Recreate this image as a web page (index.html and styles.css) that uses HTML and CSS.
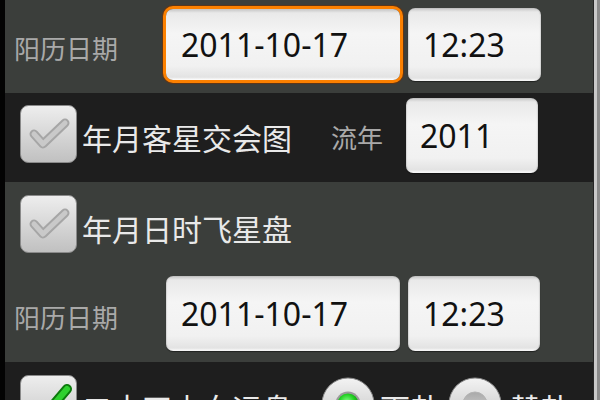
FILE: index.html
```html
<!DOCTYPE html>
<html lang="zh-CN">
<head>
<meta charset="utf-8">
<title>飞星盘</title>
<link rel="stylesheet" href="styles.css">
</head>
<body>
<div class="screen">
  <div class="edge-left"></div>
  <div class="content">
    <div class="row row-light row-top">
      <span class="label label-date">阳历日期</span>
      <div class="field field-date focused">2011-10-17</div>
      <div class="field field-time">12:23</div>
    </div>

    <div class="row row-dark row-chart">
      <svg class="checkbox" viewBox="0 0 57 58" width="57" height="58" aria-hidden="true">
        <defs>
          <linearGradient id="cbg1" x1="0" y1="0" x2="0" y2="1">
            <stop offset="0" stop-color="#eeeeee"/>
            <stop offset="1" stop-color="#c0c0c0"/>
          </linearGradient>
        </defs>
        <rect x="0.5" y="0.5" width="56" height="57" rx="8" fill="url(#cbg1)" stroke="#8a8a8a"/>
        <path d="M14 29 L23 39 L45 18" fill="none" stroke="#a6a6a6" stroke-width="9" stroke-linecap="round" stroke-linejoin="round"/>
        <path d="M14 29 L23 39 L45 18" fill="none" stroke="#c9c9c9" stroke-width="5" stroke-linecap="round" stroke-linejoin="round"/>
      </svg>
      <span class="check-text">年月客星交会图</span>
      <span class="label label-year">流年</span>
      <div class="field field-year">2011</div>
    </div>

    <div class="row-light section">
      <div class="line line-check">
        <svg class="checkbox" viewBox="0 0 57 58" width="57" height="58" aria-hidden="true">
          <defs>
            <linearGradient id="cbg2" x1="0" y1="0" x2="0" y2="1">
              <stop offset="0" stop-color="#eeeeee"/>
              <stop offset="1" stop-color="#c0c0c0"/>
            </linearGradient>
          </defs>
          <rect x="0.5" y="0.5" width="56" height="57" rx="8" fill="url(#cbg2)" stroke="#8a8a8a"/>
          <path d="M14 29 L23 39 L45 18" fill="none" stroke="#a6a6a6" stroke-width="9" stroke-linecap="round" stroke-linejoin="round"/>
          <path d="M14 29 L23 39 L45 18" fill="none" stroke="#c9c9c9" stroke-width="5" stroke-linecap="round" stroke-linejoin="round"/>
        </svg>
        <span class="check-text">年月日时飞星盘</span>
      </div>
      <div class="line line-date">
        <span class="label label-date2">阳历日期</span>
        <div class="field field-date2">2011-10-17</div>
        <div class="field field-time2">12:23</div>
      </div>
    </div>

    <div class="row row-dark row-bottom">
      <svg class="checkbox" viewBox="0 0 57 58" width="57" height="58" aria-hidden="true">
        <defs>
          <linearGradient id="cbg3" x1="0" y1="0" x2="0" y2="1">
            <stop offset="0" stop-color="#eeeeee"/>
            <stop offset="1" stop-color="#c0c0c0"/>
          </linearGradient>
        </defs>
        <rect x="0.5" y="0.5" width="56" height="57" rx="8" fill="url(#cbg3)" stroke="#8a8a8a"/>
        <path d="M14 30 L24 41 L47 14" fill="none" stroke="#0c7a0c" stroke-width="10" stroke-linecap="round" stroke-linejoin="round"/>
        <path d="M14 30 L24 41 L47 14" fill="none" stroke="#2fd02f" stroke-width="6" stroke-linecap="round" stroke-linejoin="round"/>
      </svg>
      <span class="check-text">二十四山向运盘</span>
      <svg class="radio radio-first" viewBox="0 0 54 54" width="54" height="54" aria-hidden="true">
        <defs>
          <linearGradient id="rbg1" x1="0" y1="0" x2="0" y2="1">
            <stop offset="0" stop-color="#f3f3f3"/>
            <stop offset="1" stop-color="#bdbdbd"/>
          </linearGradient>
          <radialGradient id="rdot1" cx="0.45" cy="0.4" r="0.6">
            <stop offset="0" stop-color="#8cff8c"/>
            <stop offset="0.6" stop-color="#22d022"/>
            <stop offset="1" stop-color="#0b8f0b"/>
          </radialGradient>
        </defs>
        <circle cx="27" cy="27" r="26" fill="url(#rbg1)" stroke="#8a8a8a"/>
        <circle cx="27" cy="27" r="12.5" fill="#9a9a9a"/>
        <circle cx="27" cy="27" r="10.5" fill="url(#rdot1)"/>
      </svg>
      <span class="radio-text">下卦</span>
      <svg class="radio radio-second" viewBox="0 0 54 54" width="54" height="54" aria-hidden="true">
        <defs>
          <linearGradient id="rbg2" x1="0" y1="0" x2="0" y2="1">
            <stop offset="0" stop-color="#f3f3f3"/>
            <stop offset="1" stop-color="#bdbdbd"/>
          </linearGradient>
          <linearGradient id="rdot2" x1="0" y1="0" x2="0" y2="1">
            <stop offset="0" stop-color="#a9a9a9"/>
            <stop offset="1" stop-color="#d8d8d8"/>
          </linearGradient>
        </defs>
        <circle cx="27" cy="27" r="26" fill="url(#rbg2)" stroke="#8a8a8a"/>
        <circle cx="27" cy="27" r="12" fill="url(#rdot2)" stroke="#b3b3b3"/>
      </svg>
      <span class="radio-text radio-text2">替卦</span>
    </div>
  </div>
  <div class="scrollbar"></div>
</div>
</body>
</html>
```

FILE: styles.css
```css
html, body {
  margin: 0;
  padding: 0;
  width: 600px;
  height: 400px;
  overflow: hidden;
  background: #000;
}

.screen {
  display: flex;
  width: 600px;
  height: 400px;
  font-family: "Noto Sans", "Noto Sans CJK SC", sans-serif;
}

.edge-left {
  flex: none;
  width: 5px;
  background: #030303;
}

.content {
  flex: 1;
  min-width: 0;
  display: flex;
  flex-direction: column;
  overflow: hidden;
}

.scrollbar {
  flex: none;
  width: 7px;
  background: linear-gradient(to right, #262626 0, #262626 1px, #c9c9c9 1px, #c9c9c9 4.5px, #8a8a8a 4.5px);
}

.row {
  display: flex;
  align-items: flex-start;
  box-sizing: border-box;
  flex: none;
}

.row-light {
  background-color: #3b3e3b;
}

.row-dark {
  background-color: #1e1e1e;
}

/* labels */
.label {
  flex: none;
  font-size: 26px;
  line-height: 32px;
  color: #a9a9a9;
}

.check-text {
  flex: none;
  font-size: 30px;
  line-height: 36px;
  color: #e9e9e9;
  margin-left: 5px;
}

.radio-text {
  flex: none;
  font-size: 30px;
  line-height: 36px;
  color: #e9e9e9;
  margin-left: 5px;
  margin-top: 29px;
}

.radio-text2 {
  margin-left: 8px;
}

/* fields */
.field {
  flex: none;
  box-sizing: border-box;
  display: flex;
  align-items: center;
  padding-left: 15px;
  font-size: 32px;
  color: #111;
  border-radius: 7px;
  background: linear-gradient(to bottom, #c4c4c4 0, #e9e9e9 4px, #f5f5f5 35%, #f1f1f1 80%, #e3e3e3 96%, #ffffff 100%);
  box-shadow: inset 1px 0 1px rgba(0,0,0,0.12), inset -1px 0 1px rgba(0,0,0,0.12), 0 1px 1px rgba(0,0,0,0.45);
}

.focused {
  box-shadow: 0 0 0 3px #fb8000, 0 0 0 4px rgba(120,50,0,0.6);
}

/* row 1 */
.row-top {
  height: 93px;
  padding: 0 0 0 9px;
}

.label-date {
  width: 152px;
  margin-top: 33px;
}

.field-date {
  width: 234px;
  height: 71px;
  margin-top: 9px;
}

.field-time {
  width: 133px;
  height: 73px;
  margin-top: 8px;
  margin-left: 8px;
}

/* row 2 */
.row-chart {
  height: 89px;
  padding-left: 15px;
}

.checkbox {
  flex: none;
  display: block;
}

.row-chart .checkbox {
  margin-top: 12px;
}

.row-chart .check-text {
  margin-top: 28px;
}

.label-year {
  margin-left: 39px;
  margin-top: 29px;
}

.field-year {
  width: 132px;
  height: 75px;
  margin-top: 5px;
  margin-left: 23px;
  padding-left: 14px;
}

/* row 3 */
.section {
  flex: none;
  height: 180px;
  display: flex;
  flex-direction: column;
}

.line {
  display: flex;
  align-items: flex-start;
}

.line-check {
  height: 71px;
  padding-left: 15px;
}

.line-check .checkbox {
  margin-top: 13px;
}

.line-check .check-text {
  margin-top: 30px;
}

.line-date {
  margin-top: 23px;
  padding-left: 9px;
}

.label-date2 {
  width: 152px;
  margin-top: 26px;
}

.field-date2 {
  width: 234px;
  height: 75px;
}

.field-time2 {
  width: 132px;
  height: 75px;
  margin-left: 8px;
}

/* row 4 */
.row-bottom {
  flex: 1;
  padding-left: 15px;
}

.row-bottom .checkbox {
  margin-top: 13px;
}

.row-bottom .check-text {
  margin-top: 29px;
}

.radio {
  flex: none;
  display: block;
  margin-top: 15px;
}

.radio-first {
  margin-left: 29px;
}

.radio-second {
  margin-left: 8px;
}
```
